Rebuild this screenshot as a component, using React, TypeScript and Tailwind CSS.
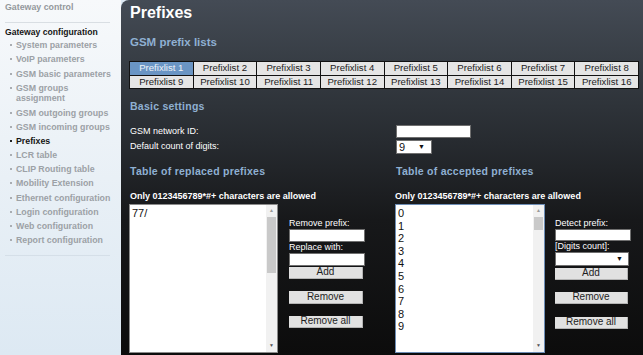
const SIDE_ITEMS: { label: React.ReactNode; active?: boolean }[] = [
  { label: 'System parameters' },
  { label: 'VoIP parameters' },
  { label: 'GSM basic parameters' },
  { label: <>GSM groups<br />assignment</> },
  { label: 'GSM outgoing groups' },
  { label: 'GSM incoming groups' },
  { label: 'Prefixes', active: true },
  { label: 'LCR table' },
  { label: 'CLIP Routing table' },
  { label: 'Mobility Extension' },
  { label: 'Ethernet configuration' },
  { label: 'Login configuration' },
  { label: 'Web configuration' },
  { label: 'Report configuration' },
]

const TABS = Array.from({ length: 16 }, (_, i) => `Prefixlist ${i + 1}`)

function Sidebar() {
  return (
    <aside className="w-[121px] flex-shrink-0 bg-[linear-gradient(180deg,#f7f9fb_0%,#e9f0f6_50%,#dde9f3_100%)] px-[5px] font-bold text-[8.8px] text-[#9ca1a6]">
      <div className="mt-[2px] leading-[11px] text-[#94989c]">Gateway control</div>
      <div className="mt-[9px] h-px w-[105px] bg-[#d9dee3]" />
      <div className="mt-[3.5px] leading-[11px] text-[8.6px] text-[#151515]">Gateway configuration</div>
      <ul className="mt-[2.75px] flex flex-col gap-[3.7px]">
        {SIDE_ITEMS.map((item, i) => (
          <li key={i} className="flex items-start whitespace-nowrap leading-[10.5px]">
            <span className={`mt-[4px] ml-[5px] mr-[4px] h-[2px] w-[2px] flex-shrink-0 ${item.active ? 'bg-[#222]' : 'bg-[#a9adb2]'}`} />
            <span className={item.active ? 'text-[#151515]' : ''}>{item.label}</span>
          </li>
        ))}
      </ul>
      <div className="mt-[9px] h-px w-[105px] bg-[#d5dfe8]" />
    </aside>
  )
}

function Btn({ label, w, h, mt }: { label: string; w: string; h: string; mt: string }) {
  return (
    <div className={`${w} ${h} ${mt} flex items-center justify-center bg-[#e1e1e1] border-b border-r border-[#b4b4b4] text-[10px] leading-none text-[#1e1e1e]`}>
      {label}
    </div>
  )
}

function ListBox({ lines, focused, thumb }: { lines: string[]; focused?: boolean; thumb: string }) {
  return (
    <div className={`flex h-[149px] bg-white border ${focused ? 'w-[150px] border-[#6d8db5]' : 'w-[149px] border-[#8b8b8b]'}`}>
      <div className="flex-1 pl-[2px] pt-[2px] text-[11px] leading-[12.6px] text-[#111]">
        {lines.map((l, i) => (
          <div key={i}>{l}</div>
        ))}
      </div>
      <div className="flex w-[11px] flex-col bg-[#f1f1f1]">
        <div className="flex h-[12px] items-center justify-center text-[5px] text-[#9a9a9a]">▲</div>
        <div className={`${thumb} mx-[1px] bg-[#c9c9c9]`} />
        <div className="flex-1" />
        <div className="flex h-[12px] items-center justify-center text-[5px] text-[#555]">▼</div>
      </div>
    </div>
  )
}

function Field({ w, h }: { w: string; h: string }) {
  return <div className={`${w} ${h} bg-white border border-[#6f6f6f]`} />
}

function SectionHead({ children, className = '' }: { children: React.ReactNode; className?: string }) {
  return (
    <div className={`text-[10.5px] leading-[13px] font-bold tracking-[0.25px] text-[#8fb0d2] ${className}`}>{children}</div>
  )
}

export default function App() {
  return (
    <div className="flex h-[355px] w-[643px] overflow-hidden bg-[#dde9f3] font-['Liberation_Sans',Arial,sans-serif]">
      <Sidebar />
      <main className="flex-1 rounded-tl-[8px] bg-[linear-gradient(180deg,#444b55_0%,#353b42_20%,#272b30_40%,#17181a_62%,#0c0c0c_100%)] pl-[9px] text-white">
        {/* Title */}
        <h1 className="mt-[1px] h-[24px] text-[16px] font-bold leading-[24px]">Prefixes</h1>
        <div className="mt-[10px] text-[11.5px] font-bold leading-[14px] text-[#8fb0d2]">GSM prefix lists</div>

        {/* Prefix list tabs */}
        <div className="-ml-[1px] mt-[12px] grid w-[510px] grid-cols-8 gap-[1px] bg-[#121212] p-[1px]">
          {TABS.map((t, i) => (
            <div
              key={t}
              className={`flex h-[12.5px] items-center justify-center text-[9.6px] leading-none ${
                i === 0 ? 'bg-[#6a95c4] text-[#eef3f8]' : 'bg-[#e5e5e5] text-[#1c1c1c]'
              }`}
            >
              {t}
            </div>
          ))}
        </div>

        {/* Basic settings */}
        <SectionHead className="mt-[11px]">Basic settings</SectionHead>
        <div className="mt-[12px] flex flex-col gap-[2px] text-[9px]">
          <div className="flex h-[13px] items-center">
            <span className="w-[266px]">GSM network ID:</span>
            <Field w="w-[75px]" h="h-[13px]" />
          </div>
          <div className="flex h-[14px] items-center">
            <span className="w-[266px]">Default count of digits:</span>
            <div className="flex h-[14px] w-[36px] items-center justify-between border border-[#6f6f6f] bg-white pl-[2px] pr-[6px] text-[11px] text-[#111]">
              <span>9</span>
              <span className="text-[7px]">▼</span>
            </div>
          </div>
        </div>

        {/* Tables */}
        <div className="mt-[11px] flex">
          <div className="w-[265px]">
            <SectionHead>Table of replaced prefixes</SectionHead>
            <div className="mt-[12px] text-[9px] font-bold leading-[12px]">Only 0123456789*#+ characters are allowed</div>
            <div className="-ml-[1px] mt-[2px] flex">
              <ListBox lines={['77/']} thumb="h-[56px]" />
              <div className="ml-[11px] flex flex-col pt-[13.5px] text-[9px] leading-[11px]">
                <span>Remove prefix:</span>
                <Field w="w-[76px]" h="h-[13px]" />
                <span>Replace with:</span>
                <Field w="w-[76px]" h="h-[13px]" />
                <Btn label="Add" w="w-[74px]" h="h-[12px]" mt="mt-[1px]" />
                <Btn label="Remove" w="w-[74px]" h="h-[13px]" mt="mt-[12px]" />
                <Btn label="Remove all" w="w-[74px]" h="h-[12px]" mt="mt-[12px]" />
              </div>
            </div>
          </div>
          <div className="flex-1">
            <SectionHead className="ml-[1px]">Table of accepted prefixes</SectionHead>
            <div className="mt-[12px] text-[9px] font-bold leading-[12px]">Only 0123456789*#+ characters are allowed</div>
            <div className="mt-[2px] flex">
              <ListBox lines={['0', '1', '2', '3', '4', '5', '6', '7', '8', '9']} focused thumb="h-[13px]" />
              <div className="ml-[10px] flex flex-col pt-[13.5px] text-[9px] leading-[11px]">
                <span>Detect prefix:</span>
                <Field w="w-[76px]" h="h-[12px]" />
                <span>[Digits count]:</span>
                <div className="flex h-[14px] w-[74px] items-center justify-end border border-[#6f6f6f] bg-white pr-[5px] text-[7px] text-[#111]">
                  ▼
                </div>
                <Btn label="Add" w="w-[73px]" h="h-[12px]" mt="mt-[2px]" />
                <Btn label="Remove" w="w-[73px]" h="h-[12px]" mt="mt-[12px]" />
                <Btn label="Remove all" w="w-[73px]" h="h-[12px]" mt="mt-[13px]" />
              </div>
            </div>
          </div>
        </div>
      </main>
    </div>
  )
}
